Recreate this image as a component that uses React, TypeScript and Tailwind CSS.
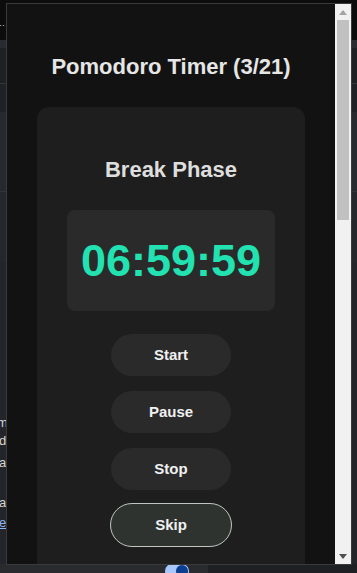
const BUTTONS = ['Start', 'Pause', 'Stop']

function Arrow({ dir, color }: { dir: 'up' | 'down'; color: string }) {
  return (
    <svg width="8" height="5" viewBox="0 0 8 5">
      <polygon points={dir === 'up' ? '0,5 8,5 4,0' : '0,0 8,0 4,5'} fill={color} />
    </svg>
  )
}

function PageBehind() {
  return (
    <div className="flex h-full flex-col">
      <div className="flex h-[40px] items-end bg-[#0c0c0c] pb-[12px] text-[9px] leading-[6px] text-[#d8d8d8]">
        <span className="-ml-[1px]">··</span>
      </div>
      <div className="flex flex-1 flex-col bg-[#24252a]">
        <div className="h-[8px] bg-[#2a2b30]" />
        <div className="h-[36px] border-b border-[#35363b] bg-[#1f2024]" />
        <div className="h-[28px] bg-[#202126]" />
        <div className="h-[80px] border-b border-[#34353a] bg-[#28292e]" />
        <div className="h-[70px] bg-[#26272c]" />
        <div className="flex w-[7px] flex-col overflow-hidden pt-[153px] text-[13px] leading-[16px] whitespace-nowrap text-[#d6d6d6]">
          <span className="-ml-[3px]">m</span>
          <span className="mt-[2px] -ml-[1px]">di</span>
          <span className="mt-[6px] -ml-[1px]">a</span>
          <span className="mt-[24px] -ml-[1px]">ac</span>
          <span className="mt-[4px] -ml-[1px] text-[#8ab4f8] underline">e</span>
        </div>
        <div className="mt-auto flex h-[9px]">
          <div className="w-[208px] bg-[#2a2b2f] pl-[165px]">
            <div className="flex h-[14px] w-[24px] items-center justify-end rounded-full bg-[#a8c7fa] pr-[1px]">
              <div className="h-[12px] w-[12px] rounded-full bg-[#0b3d91]" />
            </div>
          </div>
          <div className="flex-1 bg-[#1f2024]" />
        </div>
      </div>
    </div>
  )
}

export default function App() {
  return (
    <div className="relative h-[573px] w-[357px] overflow-hidden bg-[#1f2024] font-['Liberation_Sans',Arial,sans-serif]">
      <PageBehind />

      {/* Popup window */}
      <div className="absolute top-[3px] left-[6px] flex h-[562px] w-[346px] border border-[#3a3a3a] bg-[#121212]">
        <main className="flex-1 overflow-hidden">
          <h1 className="pt-[50px] text-center text-[22px] leading-[26px] font-bold text-[#e6e6e6]">
            Pomodoro Timer (3/21)
          </h1>

          <section className="mx-[30px] mt-[27px] flex flex-col items-center rounded-xl bg-[#1e1e1e] pt-[50px] pb-[60px]">
            <h2 className="text-[22px] leading-[26px] font-bold text-[#dedede]">Break Phase</h2>

            <div className="mt-[27px] flex h-[101px] w-[208px] items-center justify-center rounded-lg bg-[#2a2a2a]">
              <span className="text-[45px] leading-none font-bold text-[#22e2b2]">06:59:59</span>
            </div>

            <div className="mt-[23px] flex flex-col items-center gap-[15px]">
              {BUTTONS.map((label) => (
                <button
                  key={label}
                  className="h-[42px] w-[120px] rounded-full bg-[#2a2a2a] text-[15px] font-bold text-[#f0f0f0]"
                >
                  {label}
                </button>
              ))}
              <button className="-mt-[2px] h-[44px] w-[122px] rounded-full border border-[#bfc7c0] bg-[#2e332f] text-[15px] font-bold text-[#f0f0f0]">
                Skip
              </button>
            </div>
          </section>
        </main>

        {/* Scrollbar */}
        <div className="flex w-[16px] flex-col bg-[#f1f1f1]">
          <div className="flex h-[16px] items-center justify-center">
            <Arrow dir="up" color="#a3a3a3" />
          </div>
          <div className="mx-[2px] h-[200px] bg-[#c1c1c1]" />
          <div className="flex-1" />
          <div className="flex h-[16px] items-center justify-center">
            <Arrow dir="down" color="#505050" />
          </div>
        </div>
      </div>
    </div>
  )
}
